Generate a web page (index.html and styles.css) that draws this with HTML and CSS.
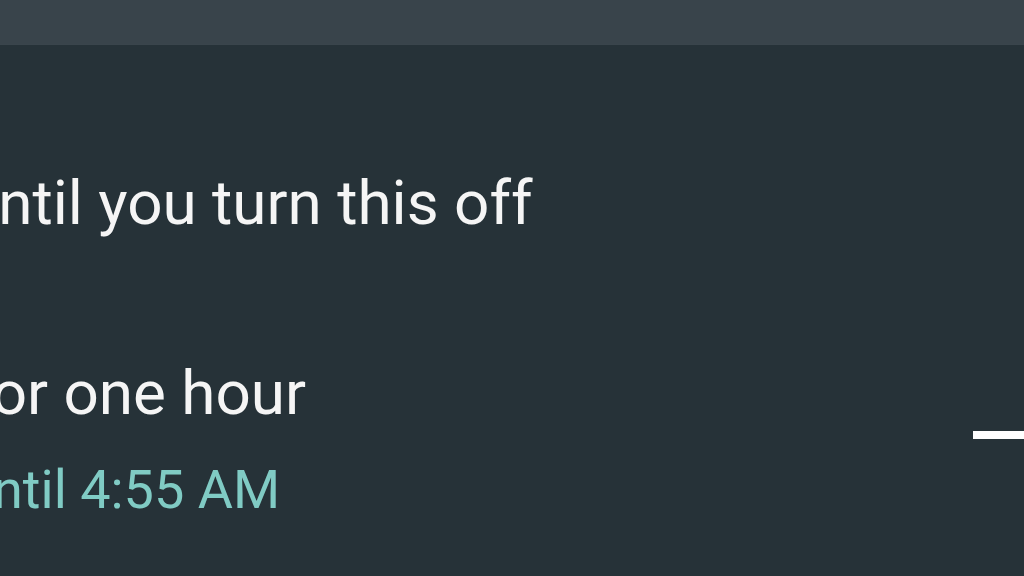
FILE: index.html
```html
<!DOCTYPE html>
<html>
<head>
<meta charset="utf-8">
<link rel="stylesheet" href="styles.css">
</head>
<body>
<div class="screen">
  <div class="topbar"></div>
  <div class="content">
    <div class="option option-first">Until you turn this off</div>
    <div class="option option-timed">
      <div class="option-body">
        <div class="option-title">For one hour</div>
        <div class="option-sub">Until 4:55 AM</div>
      </div>
      <div class="minus"></div>
    </div>
  </div>
</div>
</body>
</html>
```
FILE: styles.css
```css
html, body {
  margin: 0;
  padding: 0;
}
body {
  width: 1024px;
  height: 576px;
  overflow: hidden;
  background: #263238;
  font-family: Roboto, "Noto Sans", sans-serif;
}
.screen {
  display: flex;
  flex-direction: column;
  height: 576px;
}
.topbar {
  height: 44px;
  background: #39444b;
  border-bottom: 1px solid #3a454c;
  flex: none;
}
.content {
  display: flex;
  flex-direction: column;
}
.option {
  color: #f5f5f5;
  font-size: 62px;
  line-height: 1;
  white-space: nowrap;
}
.option-first {
  margin-top: 127px;
  margin-left: -42px;
}
.option-timed {
  display: flex;
  align-items: flex-start;
  justify-content: space-between;
  margin-top: 128px;
}
.option-body {
  margin-left: -42px;
  display: flex;
  flex-direction: column;
}
.option-sub {
  color: #80cbc4;
  font-size: 54px;
  margin-top: 39px;
}
.minus {
  width: 51px;
  height: 8px;
  background: #ffffff;
  margin-top: 69px;
}
```
